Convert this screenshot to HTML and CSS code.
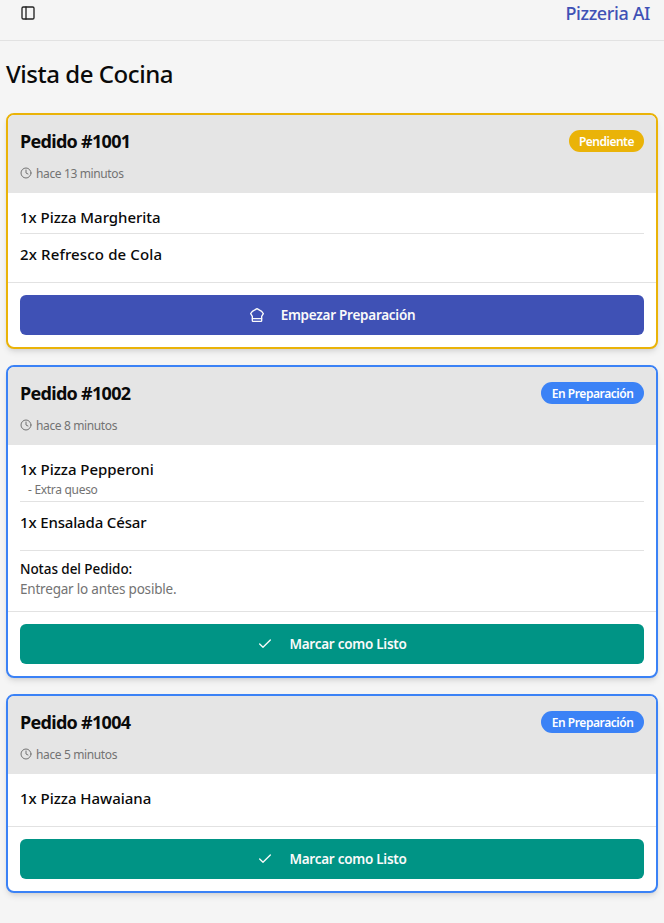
FILE: index.html
```html
<!DOCTYPE html>
<html lang="es">
<head>
<meta charset="utf-8">
<title>Vista de Cocina</title>
<link rel="stylesheet" href="styles.css">
</head>
<body>
<svg class="defs" width="0" height="0" aria-hidden="true">
  <symbol id="clock" viewBox="0 0 24 24"><circle cx="12" cy="12" r="10"/><path d="M12 6v6l4 2"/></symbol>
  <symbol id="check" viewBox="0 0 24 24"><path d="M20 6 9 17l-5-5"/></symbol>
  <symbol id="chef" viewBox="0 0 24 24"><path d="M5 14 2.500 10 5 6.500 12 2.500l7 4 2.500 3.500-2.500 4v6.500q0 1-1 1H6q-1 0-1-1Z"/><path d="M5 17.500h14"/></symbol>
</svg>
<header class="topbar">
  <svg class="icon panel" viewBox="0 0 24 24"><rect x="3" y="3" width="18" height="18" rx="2"/><path d="M9 3v18"/></svg>
  <span class="brand">Pizzeria AI</span>
</header>
<main class="main">
  <h1 class="title">Vista de Cocina</h1>
  <article class="card pending">
    <div class="card-head">
      <div class="head-row"><h2 class="order">Pedido #1001</h2><span class="badge">Pendiente</span></div>
      <p class="time"><svg class="icon"><use href="#clock"/></svg><span>hace 13 minutos</span></p>
    </div>
    <div class="card-body">
      <ul class="items">
        <li class="item"><span class="name">1x Pizza Margherita</span></li>
        <li class="item"><span class="name wide">2x Refresco de Cola</span></li>
      </ul>
    </div>
    <div class="card-foot"><button class="btn start"><svg class="icon"><use href="#chef"/></svg><span>Empezar Preparación</span></button></div>
  </article>
  <article class="card preparing">
    <div class="card-head">
      <div class="head-row"><h2 class="order">Pedido #1002</h2><span class="badge">En Preparación</span></div>
      <p class="time"><svg class="icon"><use href="#clock"/></svg><span>hace 8 minutos</span></p>
    </div>
    <div class="card-body">
      <ul class="items">
        <li class="item"><span class="name">1x Pizza Pepperoni</span><span class="extra">- Extra queso</span></li>
        <li class="item"><span class="name tight">1x Ensalada César</span></li>
      </ul>
      <div class="notes"><p class="notes-label">Notas del Pedido:</p><p class="notes-text">Entregar lo antes posible.</p></div>
    </div>
    <div class="card-foot"><button class="btn ready"><svg class="icon"><use href="#check"/></svg><span>Marcar como Listo</span></button></div>
  </article>
  <article class="card preparing">
    <div class="card-head">
      <div class="head-row"><h2 class="order">Pedido #1004</h2><span class="badge">En Preparación</span></div>
      <p class="time"><svg class="icon"><use href="#clock"/></svg><span>hace 5 minutos</span></p>
    </div>
    <div class="card-body">
      <ul class="items">
        <li class="item"><span class="name">1x Pizza Hawaiana</span></li>
      </ul>
    </div>
    <div class="card-foot"><button class="btn ready"><svg class="icon"><use href="#check"/></svg><span>Marcar como Listo</span></button></div>
  </article>
</main>
</body>
</html>
```
FILE: styles.css
```css
* { box-sizing: border-box; margin: 0; padding: 0; }
body {
  min-height: 100vh;
  background: #f5f5f5;
  color: #0a0a0a;
  font-family: "Segoe UI", "Noto Sans", "Open Sans", sans-serif;
}
.defs { display: block; }
.icon { width: 16px; height: 16px; flex: none; fill: none; stroke: currentColor; stroke-width: 2; stroke-linecap: round; stroke-linejoin: round; }
.topbar {
  display: flex;
  justify-content: space-between;
  height: 41px;
  padding: 0 14px 0 20px;
  border-bottom: 1px solid #e2e2e2;
}
.panel { margin-top: 5px; color: #222; }
.brand { color: #3f51b5; font-size: 18px; line-height: 26px; font-weight: 500; letter-spacing: -0.4px; }
.main { display: flex; flex-direction: column; gap: 16px; padding: 18px 6px 0; }
.title { height: 38px; font-size: 24px; line-height: 30px; font-weight: 500; letter-spacing: -0.46px; }
.card {
  border: 2px solid;
  border-radius: 8px;
  background: #fff;
  overflow: hidden;
  box-shadow: 0 4px 6px -1px rgba(0, 0, 0, .1), 0 2px 4px -2px rgba(0, 0, 0, .1);
}
.pending { border-color: #eab308; }
.preparing { border-color: #3b82f6; }
.card-head { height: 78px; padding: 12px; background: #e5e5e5; }
.head-row { display: flex; align-items: center; justify-content: space-between; height: 28px; }
.order { font-size: 18px; line-height: 28px; font-weight: 700; letter-spacing: -0.7px; }
.badge { height: 22px; padding: 0 10.5px 0 11px; border-radius: 11px; color: #fff; font-size: 12px; line-height: 23px; font-weight: 600; letter-spacing: -0.43px; }
.pending .badge { padding: 0 10px; background: #eab308; letter-spacing: -0.5px; }
.preparing .badge { background: #3b82f6; }
.time { display: flex; align-items: center; gap: 4px; height: 16px; margin-top: 10px; color: #737373; font-size: 12px; line-height: 16px; letter-spacing: -0.37px; }
.time span { padding-top: 2px; }
.time .icon { width: 12px; height: 12px; }
.card-body { padding: 12px; }
.items { display: flex; flex-direction: column; gap: 8px; list-style: none; }
.item { display: flex; flex-direction: column; padding-bottom: 4px; border-bottom: 1px solid #e2e2e2; }
.item:last-child { border-bottom: 0; }
.name { font-size: 15px; line-height: 24px; font-weight: 500; letter-spacing: -0.03px; }
.wide { letter-spacing: 0.14px; }
.tight { letter-spacing: -0.15px; }
.extra { height: 16px; padding-left: 8px; color: #737373; font-size: 12px; line-height: 18px; letter-spacing: -0.3px; }
.notes { margin-top: 12px; padding-top: 8px; border-top: 1px solid #e2e2e2; font-size: 13.5px; line-height: 20px; }
.notes-label { font-weight: 500; letter-spacing: -0.06px; }
.notes-text { color: #737373; letter-spacing: -0.2px; }
.card-foot { padding: 12px; border-top: 1px solid #e2e2e2; }
.btn {
  display: flex; align-items: center; justify-content: center; gap: 16px;
  width: 100%; height: 40px; border: 0; border-radius: 6px;
  color: #fafafa; font: inherit; font-size: 13.5px; line-height: 20px; font-weight: 600; letter-spacing: -0.26px;
}
.start { background: #3f51b5; }
.ready { background: #009485; }
```
